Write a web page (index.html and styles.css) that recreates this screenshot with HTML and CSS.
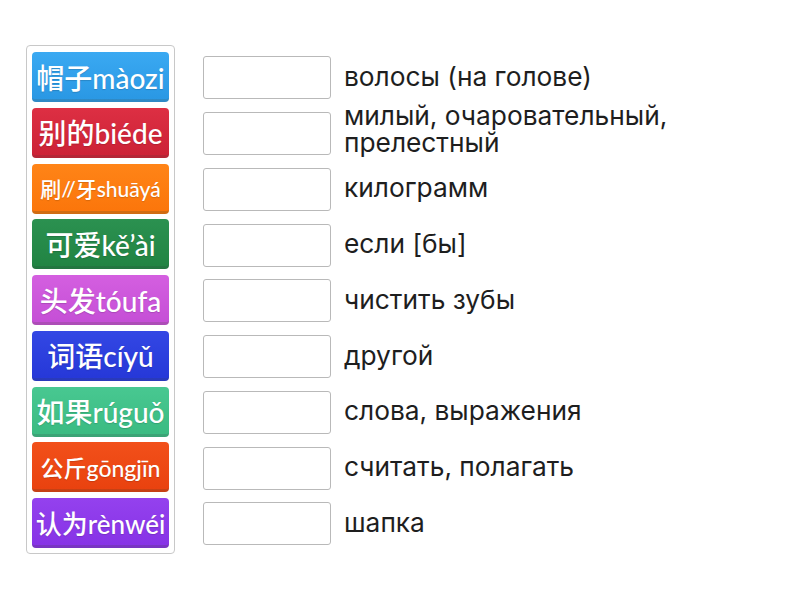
FILE: index.html
```html
<!DOCTYPE html>
<html lang="ru">
<head>
<meta charset="utf-8">
<link rel="stylesheet" href="styles.css">
</head>
<body>
<div class="page">
  <div class="tiles">
    <div class="tile c-blue fs-l">帽子màozi</div>
    <div class="tile c-red fs-l">别的biéde</div>
    <div class="tile c-orange fs-xs">刷//牙shuāyá</div>
    <div class="tile c-green fs-l">可爱kě’ài</div>
    <div class="tile c-pink fs-l">头发tóufa</div>
    <div class="tile c-navy fs-l">词语cíyǔ</div>
    <div class="tile c-teal fs-l">如果rúguǒ</div>
    <div class="tile c-flame fs-s">公斤gōngjīn</div>
    <div class="tile c-purple fs-m">认为rènwéi</div>
  </div>
  <div class="rows">
    <div class="row"><div class="slot"></div><div class="def">волосы (на голове)</div></div>
    <div class="row"><div class="slot"></div><div class="def def-two">милый, очаровательный, прелестный</div></div>
    <div class="row"><div class="slot"></div><div class="def">килограмм</div></div>
    <div class="row"><div class="slot"></div><div class="def">если [бы]</div></div>
    <div class="row"><div class="slot"></div><div class="def">чистить зубы</div></div>
    <div class="row"><div class="slot"></div><div class="def">другой</div></div>
    <div class="row"><div class="slot"></div><div class="def">слова, выражения</div></div>
    <div class="row"><div class="slot"></div><div class="def">считать, полагать</div></div>
    <div class="row"><div class="slot"></div><div class="def">шапка</div></div>
  </div>
</div>
</body>
</html>
```

FILE: styles.css
```css
html, body {
  margin: 0;
  padding: 0;
  background: #ffffff;
}
.page {
  display: flex;
  align-items: flex-start;
  padding: 45px 0 0 26px;
}
.tiles {
  display: flex;
  flex-direction: column;
  gap: 5.75px;
  width: 137px;
  padding: 6px 5px 5px 5px;
  border: 1px solid #c8c8c8;
  border-radius: 4px;
}
.tile {
  height: 50px;
  box-sizing: border-box;
  border-radius: 4px;
  border-bottom: 3px solid rgba(0,0,0,0.18);
  display: flex;
  align-items: center;
  justify-content: center;
  color: #fff;
  font-family: "Lato", "Noto Sans CJK SC", sans-serif;
  font-weight: 500;
  white-space: nowrap;
  text-shadow: 0 1px 1px rgba(0,0,0,0.15);
  padding-top: 2px;
}
.fs-l { font-size: 28px; }
.fs-m { font-size: 26px; }
.fs-s { font-size: 23px; }
.fs-xs { font-size: 21px; }
.c-blue { background: linear-gradient(#3aa9f2, #2a98e4); }
.c-red { background: linear-gradient(#dd2f43, #cc2236); }
.c-orange { background: linear-gradient(#ff8417, #fb760b); }
.c-green { background: linear-gradient(#2b9150, #218443); }
.c-pink { background: linear-gradient(#d45fe0, #c54fd6); }
.c-navy { background: linear-gradient(#3347e4, #2638d8); }
.c-teal { background: linear-gradient(#48c891, #3bbb82); }
.c-flame { background: linear-gradient(#f2501a, #e9420f); }
.c-purple { background: linear-gradient(#9441ee, #8733e6); }
.rows {
  display: flex;
  flex-direction: column;
  margin-left: 28px;
  padding-top: 5px;
}
.row {
  height: 55.75px;
  display: flex;
  align-items: center;
  gap: 13px;
}
.slot {
  width: 128px;
  height: 43px;
  box-sizing: border-box;
  border: 1px solid #b9b9b9;
  border-radius: 3px;
  background: #fff;
  flex: none;
}
.def {
  font-family: "Inter", "Liberation Sans", sans-serif;
  font-size: 26.3px;
  line-height: 27px;
  color: #1e1e1e;
  width: 420px;
  margin-top: -3px;
}
.def-two {
  margin-top: -9px;
}
```
